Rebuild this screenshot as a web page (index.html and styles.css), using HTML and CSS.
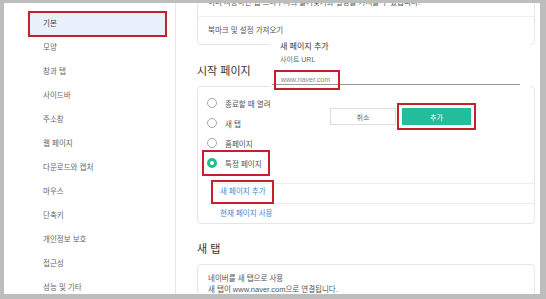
FILE: index.html
```html
<!DOCTYPE html>
<html lang="ko">
<head>
    <meta charset="UTF-8">
    <title>설정 - 기본</title>
    <link rel="stylesheet" href="styles.css">
</head>
<body>
    <div class="window">
        <nav class="sidebar">
            <div class="nav-item active">기본</div>
            <div class="nav-item">모양</div>
            <div class="nav-item">창과 탭</div>
            <div class="nav-item">사이드바</div>
            <div class="nav-item">주소창</div>
            <div class="nav-item">웹 페이지</div>
            <div class="nav-item">다운로드와 캡처</div>
            <div class="nav-item">마우스</div>
            <div class="nav-item">단축키</div>
            <div class="nav-item">개인정보 보호</div>
            <div class="nav-item">접근성</div>
            <div class="nav-item">성능 및 기타</div>
        </nav>

        <main class="main">
            <section class="card card-import">
                <div class="card-row">이미 사용하던 웹 브라우저의 즐겨찾기와 설정을 가져올 수 있습니다.</div>
                <div class="card-row">북마크 및 설정 가져오기</div>
            </section>

            <h2 class="section-title">시작 페이지</h2>
            <section class="card">
                <div class="radio-list">
                    <label class="radio-row"><span class="radio"></span>종료할 때 열려 있던 탭 다시 열기</label>
                    <label class="radio-row"><span class="radio"></span>새 탭</label>
                    <label class="radio-row"><span class="radio"></span>홈페이지</label>
                    <label class="radio-row checked marked"><span class="radio"></span>특정 페이지</label>
                </div>
                <div class="links">
                    <div class="link-row"><a href="#" class="link marked">새 페이지 추가</a></div>
                    <div class="link-row"><a href="#" class="link">현재 페이지 사용</a></div>
                </div>
            </section>

            <h2 class="section-title section-title-tab">새 탭</h2>
            <section class="card">
                <div class="card-body">
                    <div>네이버를 새 탭으로 사용</div>
                    <div>새 탭이 www.naver.com으로 연결됩니다.</div>
                </div>
            </section>
        </main>

        <div class="dialog">
            <div class="dialog-title">새 페이지 추가</div>
            <div class="dialog-label">사이트 URL</div>
            <div class="url-field"><span class="url-value">www.naver.com</span></div>
            <div class="dialog-actions">
                <button class="btn">취소</button>
                <button class="btn btn-primary">추가</button>
            </div>
        </div>
    </div>
</body>
</html>
```

FILE: styles.css
```css
body {
    margin: 0;
    padding: 3px 6px 5px 4px;
    background: #bdbdbd;
    font-family: "Liberation Sans", "Noto Sans CJK KR", sans-serif;
}
.window {
    position: relative;
    display: flex;
    height: 291px;
    background: #fff;
    overflow: hidden;
}
.sidebar {
    flex: none;
    width: 172px;
    box-sizing: border-box;
    padding-top: 9px;
    border-right: 1px solid #e6e6e6;
}
.nav-item {
    height: 24px;
    line-height: 24px;
    margin: 0 9px 0 25px;
    padding-left: 14px;
    font-size: 7.5px;
    color: #666;
}
.nav-item.active {
    background: #e8f0fb;
    color: #444;
    outline: 2px solid #c61f2e;
    outline-offset: -1px;
}
.main {
    flex: 1;
    padding: 0 5px 0 21px;
}
.card {
    border: 1px solid #e6e6e6;
    border-radius: 4px;
}
.card-import {
    margin-top: -15px;
}
.card-row {
    height: 27px;
    line-height: 27px;
    padding-left: 10px;
    font-size: 7.5px;
    color: #555;
    white-space: nowrap;
    overflow: hidden;
}
.card-row + .card-row {
    border-top: 1px solid #f0f0f0;
}
.section-title {
    margin: 18px 0 7px;
    font-size: 11px;
    line-height: 16px;
    font-weight: normal;
    color: #333;
}
.section-title-tab {
    margin-top: 17px;
}
.radio-list {
    padding-top: 6px;
}
.radio-row {
    display: flex;
    align-items: center;
    width: max-content;
    height: 20px;
    margin-left: 7px;
    padding: 0 5px 0 2px;
    font-size: 7.5px;
    color: #555;
    white-space: nowrap;
}
.radio {
    width: 8px;
    height: 8px;
    margin-right: 8px;
    border: 1px solid #a8a8a8;
    border-radius: 50%;
}
.checked .radio {
    width: 4px;
    height: 4px;
    border: 3px solid #1fbf8f;
}
.marked {
    outline: 2px solid #c61f2e;
    outline-offset: 1px;
}
.links {
    margin: 10px 0 0 12px;
    border-top: 1px solid #ececec;
}
.link-row {
    display: flex;
    align-items: flex-start;
    height: 19px;
    padding-left: 3px;
}
.link-row + .link-row {
    border-top: 1px solid #ececec;
}
.link {
    padding: 0 6px 0 7px;
    line-height: 20px;
    font-size: 7.5px;
    color: #4787d1;
    text-decoration: none;
}
.link.marked {
    margin-top: -2px;
    outline-offset: 0;
}
.card-body {
    padding: 8px 0 0 10px;
    font-size: 7.5px;
    line-height: 11px;
    color: #555;
}
.dialog {
    position: absolute;
    left: 266px;
    top: 35px;
    width: 260px;
    height: 100px;
    box-sizing: border-box;
    padding: 3px 0 0 10px;
    background: #fff;
}
.dialog-title {
    font-size: 8px;
    line-height: 12px;
    color: #333;
}
.dialog-label {
    margin-top: 1px;
    font-size: 7px;
    line-height: 12px;
    color: #666;
}
.url-field {
    height: 16px;
    margin: 2px 10px 0 -8px;
    border-bottom: 1px solid #999;
}
.url-value {
    display: inline-block;
    height: 16px;
    line-height: 16px;
    margin-left: 4px;
    padding: 0 8px 0 5px;
    font-size: 7px;
    color: #888;
    outline: 2px solid #c61f2e;
}
.dialog-actions {
    display: flex;
    gap: 6px;
    margin: 23px 0 0 50px;
}
.btn {
    width: 66px;
    height: 17px;
    padding: 0;
    border: 1px solid #ddd;
    background: #fff;
    font-family: inherit;
    font-size: 7px;
    color: #666;
}
.btn-primary {
    width: 69px;
    border-color: #22bd9b;
    background: #22bd9b;
    color: #fff;
    outline: 2px solid #c61f2e;
    outline-offset: 3px;
}
```
